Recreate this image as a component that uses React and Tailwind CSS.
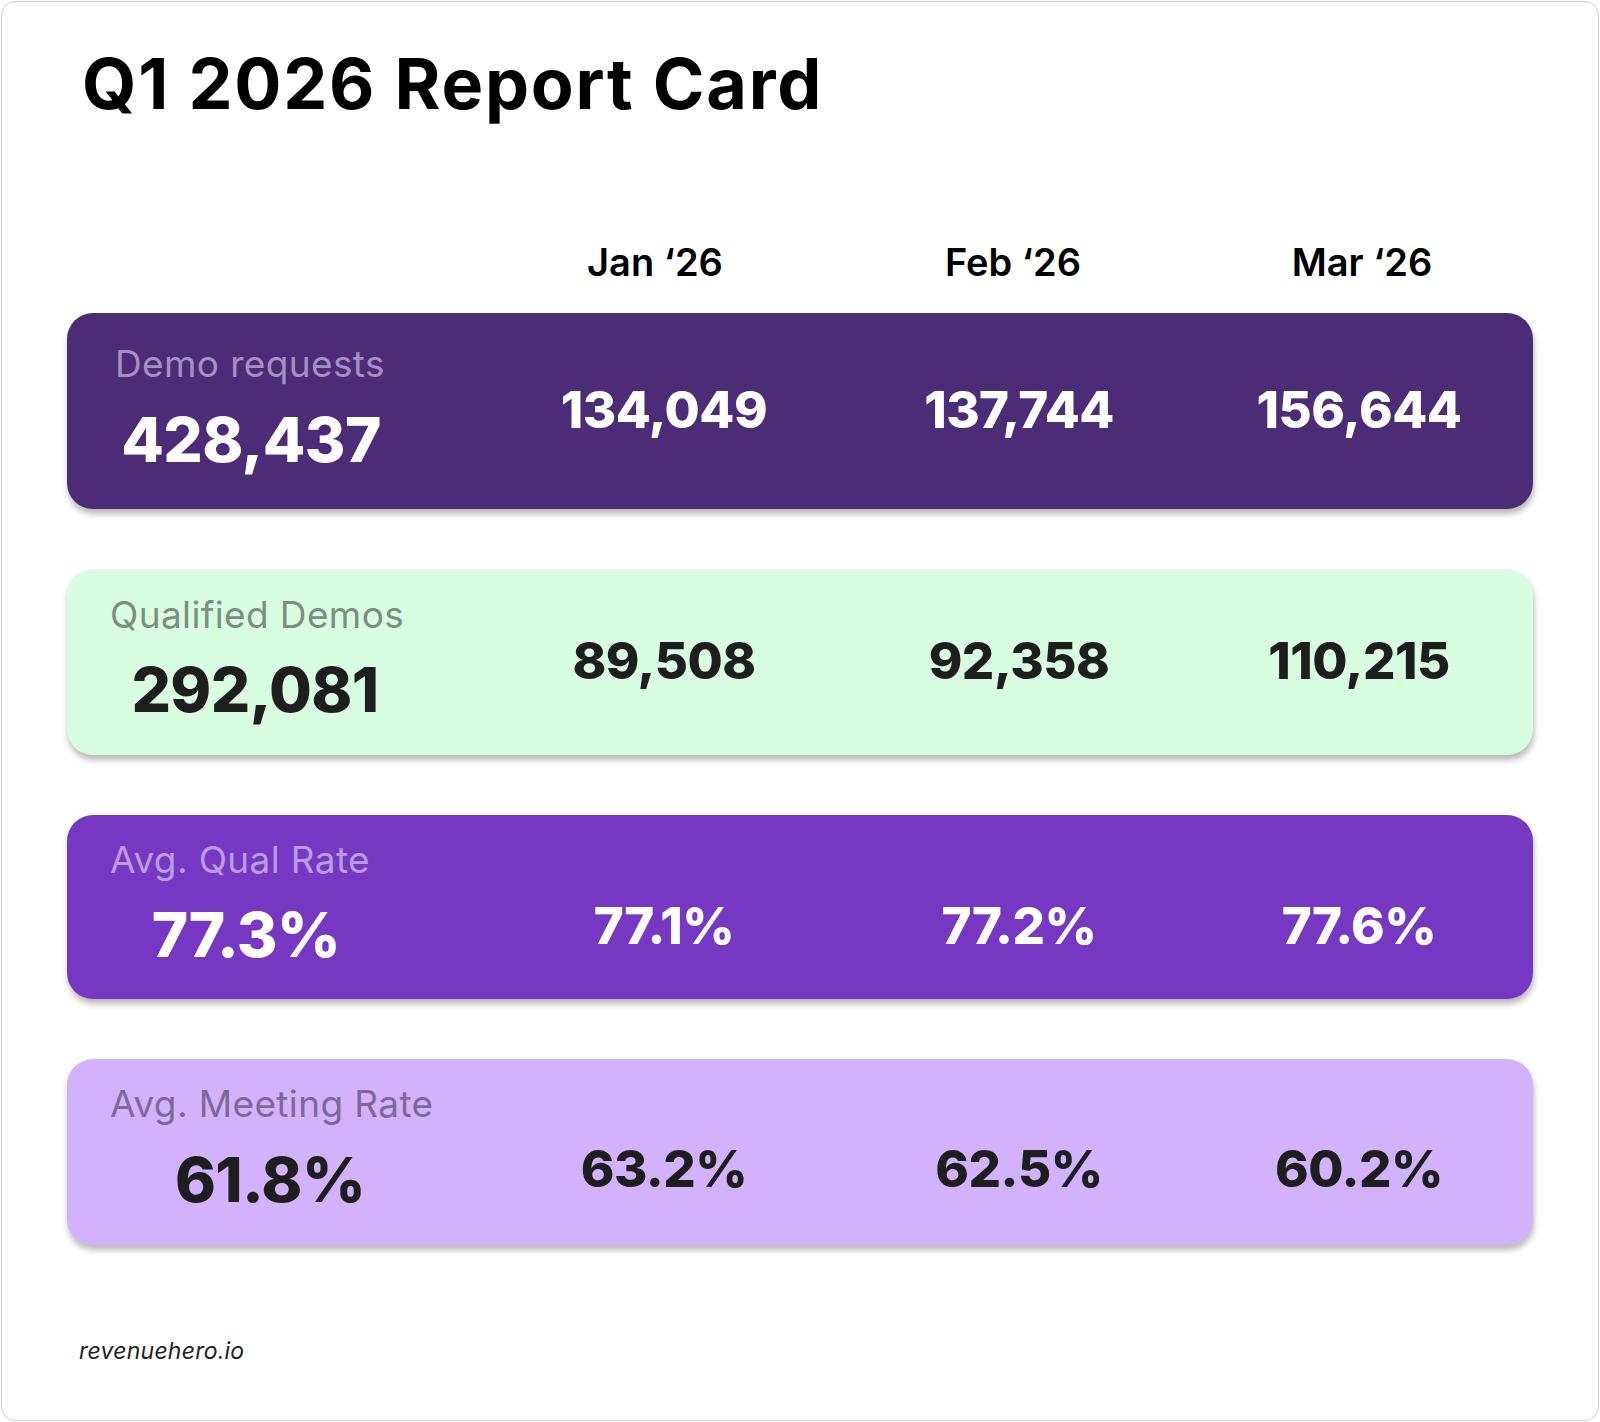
import React from "react";

const rows = [
  {
    label: "Demo requests",
    total: "428,437",
    values: ["134,049", "137,744", "156,644"],
    card: "bg-[#4c2c76] h-[196px]",
    labelCls: "text-[#a590c6] pl-[48px] pt-[32px]",
    numCls: "text-white",
    totalBox: "w-[368px] pt-[27px]",
    valPad: "pt-[71px]",
  },
  {
    label: "Qualified Demos",
    total: "292,081",
    values: ["89,508", "92,358", "110,215"],
    card: "bg-[#d8fde0] h-[186px]",
    labelCls: "text-[#7b8f80] pl-[43px] pt-[27px]",
    numCls: "text-[#1e1e1e]",
    totalBox: "w-[376px] pt-[26px]",
    valPad: "pt-[66px]",
  },
  {
    label: "Avg. Qual Rate",
    total: "77.3%",
    values: ["77.1%", "77.2%", "77.6%"],
    card: "bg-[#7638c2] h-[184px]",
    labelCls: "text-[#b89de6] pl-[43px] pt-[26px]",
    numCls: "text-white",
    totalBox: "w-[358px] pt-[26px]",
    valPad: "pt-[85px]",
  },
  {
    label: "Avg. Meeting Rate",
    total: "61.8%",
    values: ["63.2%", "62.5%", "60.2%"],
    card: "bg-[#d3b2fd] h-[186px]",
    labelCls: "text-[#7c6996] pl-[43px] pt-[26px]",
    numCls: "text-[#1e1e1e]",
    totalBox: "w-[406px] pt-[27px]",
    valPad: "pt-[84px]",
  },
];

export default function App() {
  return (
    <div
      className="w-[1600px] h-[1422px] bg-white p-[1px]"
      style={{ fontFamily: "Inter, 'Noto Sans', sans-serif" }}
    >
      <div className="h-full border border-[#d2d2d2] rounded-[14px] flex flex-col">
        <h1 className="mt-[47px] pl-[80px] text-[70px] leading-none font-bold tracking-[0.025em] text-black">
          Q1 2026 Report Card
        </h1>

        <div className="ml-[65px] w-[1466px] mt-[124px] grid grid-cols-[408px_360px_356px_342px]">
          <div />
          {["Jan ‘26", "Feb ‘26", "Mar ‘26"].map((m) => (
            <div
              key={m}
              className="text-center text-[38px] leading-none font-semibold text-black"
            >
              {m}
            </div>
          ))}
        </div>

        <div className="ml-[65px] w-[1466px] mt-[32px] flex flex-col gap-[60px]">
          {rows.map((r) => (
            <div
              key={r.label}
              className={`${r.card} rounded-[26px] shadow-[1px_5px_6px_rgba(0,0,0,0.28)] grid grid-cols-[408px_378px_332px_348px] items-start`}
            >
              <div className="flex flex-col">
                <div className={`${r.labelCls} text-[37px] leading-none font-normal tracking-[0.01em]`}>
                  {r.label}
                </div>
                <div
                  className={`${r.totalBox} ${r.numCls} text-center text-[62px] leading-none font-extrabold tracking-[-0.01em]`}
                >
                  {r.total}
                </div>
              </div>
              {r.values.map((v, i) => (
                <div
                  key={i}
                  className={`${r.valPad} ${r.numCls} text-center text-[51px] leading-none font-extrabold tracking-[-0.01em]`}
                >
                  {v}
                </div>
              ))}
            </div>
          ))}
        </div>

        <div className="mt-[95px] pl-[77px] text-[23px] leading-none italic tracking-[0.01em] text-[#222]">
          revenuehero.io
        </div>
      </div>
    </div>
  );
}
